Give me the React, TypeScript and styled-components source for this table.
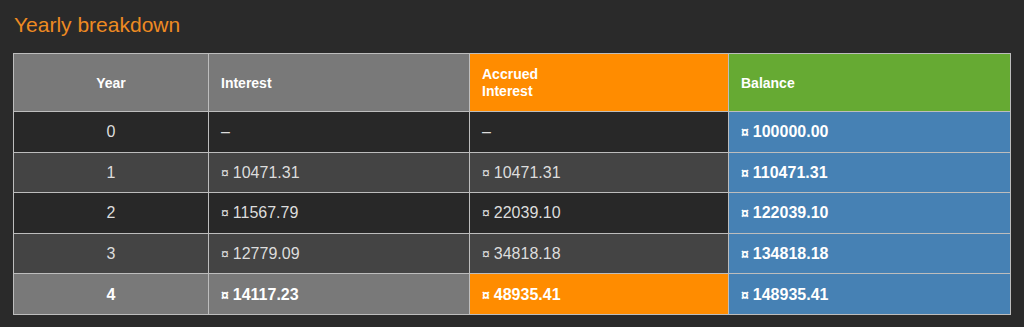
import React from "react";
import styled, { createGlobalStyle, css } from "styled-components";

const Global = createGlobalStyle`
  html, body { margin: 0; padding: 0; background: #2a2a2a; }
  body { font-family: "Liberation Sans", Arial, sans-serif; }
`;

const Page = styled.div`
  padding: 12px 14px 14px 13px;
  background: #2a2a2a;
  min-height: 300px;
`;

const Title = styled.h2`
  margin: 0 0 16px 1px;
  font-size: 21px;
  line-height: 25px;
  font-weight: normal;
  color: #ee8a22;
`;

const Table = styled.table`
  width: 997px;
  border-collapse: collapse;
  table-layout: fixed;
  border: 1px solid #bdbdbd;
`;

type Tone = "gray" | "orange" | "green" | "blue" | "dark" | "mid";

const toneBg: Record<Tone, string> = {
  gray: "#797979",
  orange: "#ff8c00",
  green: "#66aa33",
  blue: "#4681b4",
  dark: "#282828",
  mid: "#444444",
};

const Head = styled.th<{ $tone: Tone; $center?: boolean }>`
  height: 56px;
  padding: 1px 12px 0;
  border: 1px solid #bdbdbd;
  background: ${(p) => toneBg[p.$tone]};
  color: #ffffff;
  font-size: 14px;
  line-height: 17px;
  font-weight: bold;
  text-align: ${(p) => (p.$center ? "center" : "left")};
  vertical-align: middle;
`;

const Row = styled.tr<{ $tone: Tone }>`
  height: 40.6px;
  background: ${(p) => toneBg[p.$tone]};
`;

const Cell = styled.td<{ $tone?: Tone; $center?: boolean; $strong?: boolean }>`
  padding: 1px 12px 0;
  border: 1px solid #bdbdbd;
  font-size: 16px;
  line-height: 18px;
  color: #dddddd;
  text-align: ${(p) => (p.$center ? "center" : "left")};
  ${(p) => p.$tone && css`background: ${toneBg[p.$tone]};`}
  ${(p) =>
    p.$strong &&
    css`
      font-weight: bold;
      color: #ffffff;
    `}
`;

const Cur = styled.span`
  font-size: 14px;
  margin-right: 4px;
`;

const Money = ({ v }: { v: string | null }) =>
  v === null ? <>–</> : (
    <>
      <Cur>¤</Cur>
      {v}
    </>
  );

const rows = [
  { year: "0", interest: null, accrued: null, balance: "100000.00" },
  { year: "1", interest: "10471.31", accrued: "10471.31", balance: "110471.31" },
  { year: "2", interest: "11567.79", accrued: "22039.10", balance: "122039.10" },
  { year: "3", interest: "12779.09", accrued: "34818.18", balance: "134818.18" },
  { year: "4", interest: "14117.23", accrued: "48935.41", balance: "148935.41" },
];

export default function App() {
  return (
    <Page>
      <Global />
      <Title>Yearly breakdown</Title>
      <Table>
        <colgroup>
          <col style={{ width: 195 }} />
          <col style={{ width: 261 }} />
          <col style={{ width: 259 }} />
          <col style={{ width: 282 }} />
        </colgroup>
        <thead>
          <tr>
            <Head $tone="gray" $center>Year</Head>
            <Head $tone="gray">Interest</Head>
            <Head $tone="orange">
              Accrued
              <br />
              Interest
            </Head>
            <Head $tone="green">Balance</Head>
          </tr>
        </thead>
        <tbody>
          {rows.map((r, i) => {
            const last = i === rows.length - 1;
            const tone: Tone = last ? "gray" : i % 2 === 0 ? "dark" : "mid";
            return (
              <Row key={r.year} $tone={tone}>
                <Cell $center $strong={last}>{r.year}</Cell>
                <Cell $strong={last}>
                  <Money v={r.interest} />
                </Cell>
                <Cell $strong={last} $tone={last ? "orange" : undefined}>
                  <Money v={r.accrued} />
                </Cell>
                <Cell $strong $tone="blue">
                  <Money v={r.balance} />
                </Cell>
              </Row>
            );
          })}
        </tbody>
      </Table>
    </Page>
  );
}
